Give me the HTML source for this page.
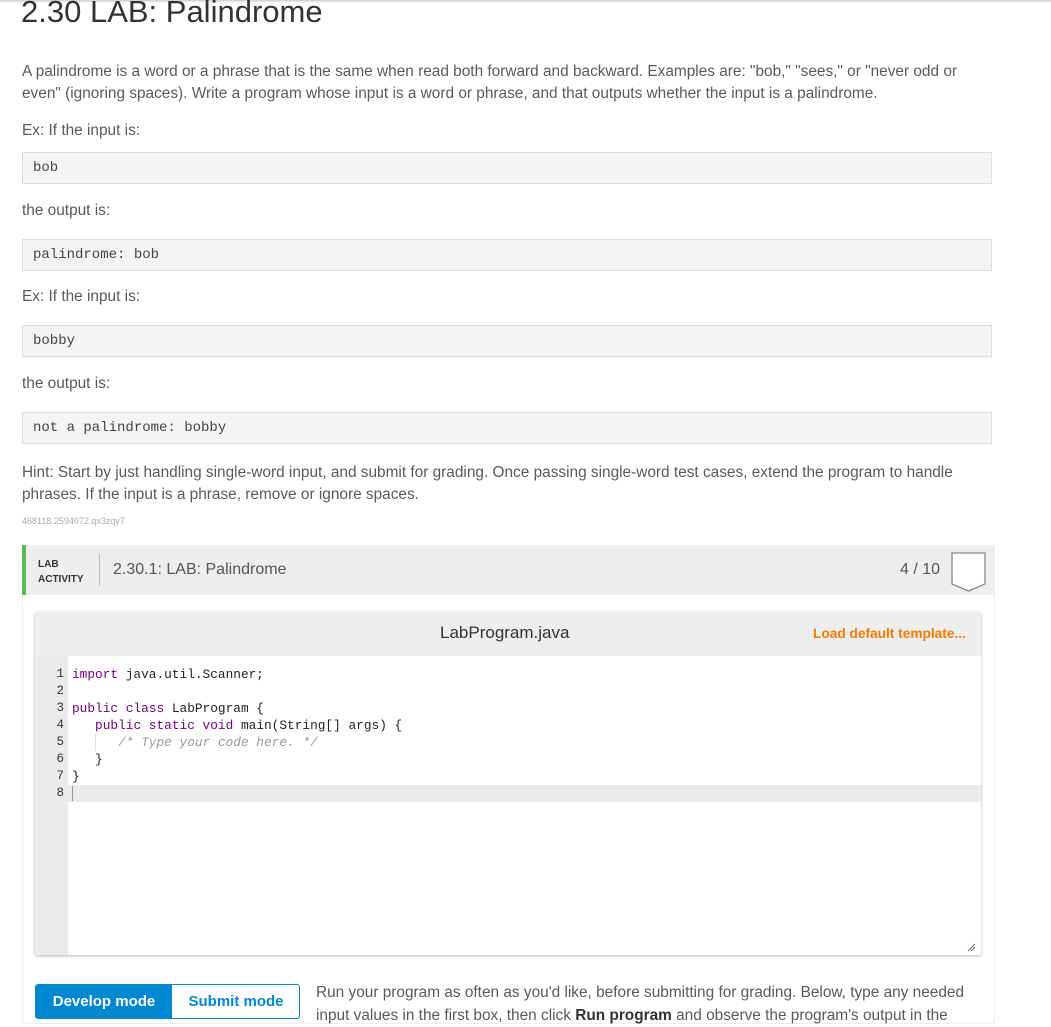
<!DOCTYPE html>
<html><head><meta charset="utf-8"><style>
*{box-sizing:border-box;margin:0;padding:0}
body{width:1051px;height:1024px;overflow:hidden;background:#fff;font-family:"Liberation Sans",sans-serif;color:#555;position:relative}
.a{position:absolute}
.t{font-size:15.4px;color:#5a5a5a;white-space:nowrap}
.box{position:absolute;left:22px;width:970px;height:32px;background:#f4f4f4;border:1px solid #ddd;font-family:"Liberation Mono",monospace;font-size:14px;color:#444;padding:7px 10px}
.code{font-family:"Liberation Mono",monospace;font-size:12.8px;white-space:pre;color:#222}
.ln{position:absolute;left:35px;width:33px;text-align:right;padding-right:4px;font-family:"Liberation Mono",monospace;font-size:12.5px;color:#333}
.kw{color:#708}
</style></head><body>
<div class="a" style="left:0;top:0;width:1051px;height:3px;background:linear-gradient(#ccc,#fff)"></div>
<div class="a" style="left:21px;top:-6px;font-size:31px;color:#333">2.30 LAB: Palindrome</div>
<div class="a t" style="left:22px;top:61px;line-height:22px">A palindrome is a word or a phrase that is the same when read both forward and backward. Examples are: "bob," "sees," or "never odd or<br>even" (ignoring spaces). Write a program whose input is a word or phrase, and that outputs whether the input is a palindrome.</div>
<div class="a t" style="left:22px;top:122px">Ex: If the input is:</div>
<div class="box" style="top:152px">bob</div>
<div class="a t" style="left:22px;top:202px">the output is:</div>
<div class="box" style="top:239px">palindrome: bob</div>
<div class="a t" style="left:22px;top:288px">Ex: If the input is:</div>
<div class="box" style="top:325px">bobby</div>
<div class="a t" style="left:22px;top:375px">the output is:</div>
<div class="box" style="top:412px">not a palindrome: bobby</div>
<div class="a t" style="left:22px;top:462px;line-height:22px">Hint: Start by just handling single-word input, and submit for grading. Once passing single-word test cases, extend the program to handle<br>phrases. If the input is a phrase, remove or ignore spaces.</div>
<div class="a" style="left:22px;top:516px;font-size:9px;color:#aaa">468118.2594072.qx3zqy7</div>

<div class="a" style="left:22px;top:545px;width:973px;height:479px;border:1px solid #eee;border-top:none"></div>
<div class="a" style="left:22px;top:545px;width:973px;height:50px;background:#eee;border-left:4px solid #5cb85c"></div>
<div class="a" style="left:38px;top:557px;font-size:10px;font-weight:bold;color:#333;line-height:15px">LAB<br>ACTIVITY</div>
<div class="a" style="left:99px;top:554px;width:1px;height:32px;background:#bbb"></div>
<div class="a" style="left:113px;top:561px;font-size:16px;color:#555">2.30.1: LAB: Palindrome</div>
<div class="a" style="left:900px;top:561px;font-size:16px;color:#555">4 / 10</div>
<svg class="a" style="left:951px;top:552px" width="36" height="40"><path d="M1 1H34V32L17.5 39L1 32Z" fill="#fff" stroke="#888" stroke-width="1.3"/></svg>

<div class="a" style="left:35px;top:612px;width:946px;height:343px;box-shadow:0 1px 3px rgba(0,0,0,.3)"></div>
<div class="a" style="left:35px;top:612px;width:946px;height:44px;background:#eee"></div>
<div class="a" style="left:440px;top:623px;font-size:17px;color:#333">LabProgram.java</div>
<div class="a" style="left:813px;top:626px;font-size:13.7px;font-weight:bold;color:#f57c00">Load default template...</div>
<div class="a" style="left:35px;top:656px;width:33px;height:299px;background:#ebebeb"></div>
<div class="a" style="left:35px;top:785px;width:946px;height:17px;background:#ebebeb"></div>
<div class="ln" style="top:666px;line-height:17px">1<br>2<br>3<br>4<br>5<br>6<br>7<br>8</div>
<div class="a code" style="left:72px;top:666px;line-height:17px"><span class="kw">import</span> java.util.Scanner;

<span class="kw">public class</span> LabProgram {
   <span class="kw">public static void</span> main(String[] args) {
      <i style="color:#999">/* Type your code here. */</i>
   }
}
</div>
<div class="a" style="left:95px;top:734px;width:1px;height:17px;background:#ddd"></div>
<div class="a" style="left:72px;top:786px;width:1px;height:15px;background:#999"></div>
<svg class="a" style="left:966px;top:942px" width="10" height="10"><path d="M2 9L9 2M5 9L9 5" stroke="#666"/></svg>

<div class="a" style="left:35px;top:984px;width:265px;height:35px;border:1px solid #0288d1;border-radius:3px;overflow:hidden">
<div class="a" style="left:0;top:0;width:136px;height:35px;background:#0288d1;color:#fff;font-weight:bold;font-size:15px;text-align:center;line-height:34px">Develop mode</div>
<div class="a" style="left:136px;top:0;width:128px;height:35px;color:#0288d1;font-weight:bold;font-size:15px;text-align:center;line-height:34px">Submit mode</div>
</div>
<div class="a t" style="left:316px;top:981px;line-height:23px">Run your program as often as you'd like, before submitting for grading. Below, type any needed<br>input values in the first box, then click <b style="color:#333">Run program</b> and observe the program's output in the</div>
</body></html>
